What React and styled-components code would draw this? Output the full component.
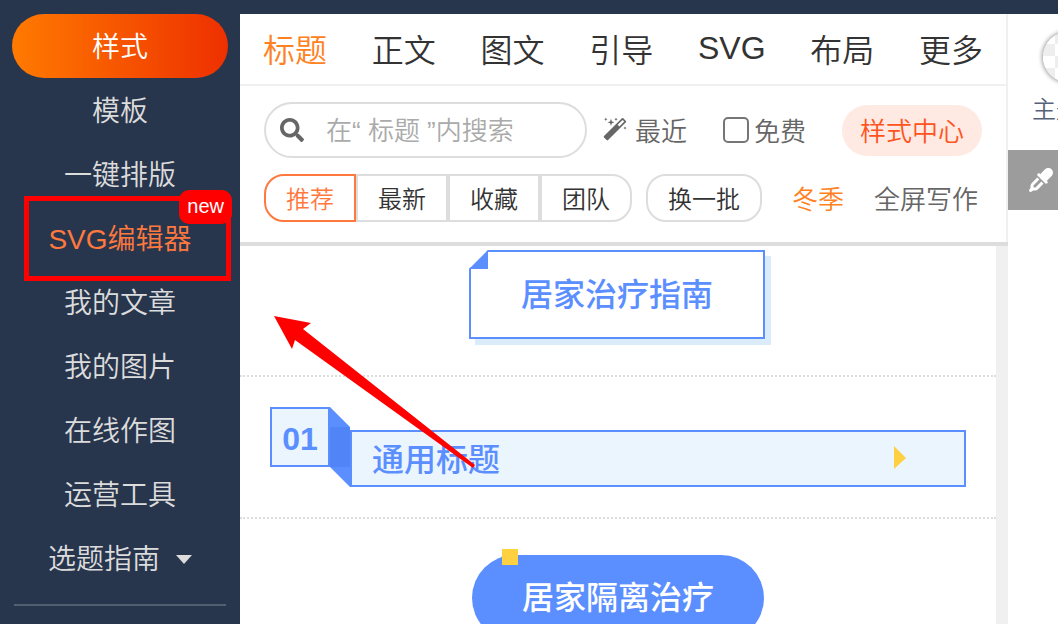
import styled, { createGlobalStyle, css } from "styled-components";
import { FaSearch } from "react-icons/fa";
import { FaEyeDropper } from "react-icons/fa6";

const menu = [
  { label: "样式", active: true },
  { label: "模板" },
  { label: "一键排版" },
  { label: "SVG编辑器", marked: true },
  { label: "我的文章" },
  { label: "我的图片" },
  { label: "在线作图" },
  { label: "运营工具" },
  { label: "选题指南", caret: true },
];

const tabs = ["标题", "正文", "图文", "引导", "SVG", "布局", "更多"];
const filters = ["推荐", "最新", "收藏", "团队"];

const WandIcon = () => (
  <svg width="24" height="24" viewBox="0 0 24 24" fill="#666" aria-hidden="true">
    <path
      fillRule="evenodd"
      d="M18.9 1.300a1 1 0 0 1 1.400 0l2.600 2.600a1 1 0 0 1 0 1.400L5.100 23.100a1 1 0 0 1-1.400 0L1 20.400a1 1 0 0 1 0-1.400zM19.600 2.900l-4.900 4.900 1.600 1.600L21.200 4.500z"
    />
    <path d="M8 1.800l.9 2.600 2.600.9-2.600.9L8 8.800l-.9-2.600-2.600-.9 2.600-.9zM2.800 .6l.5 1.200 1.200.5-1.200.5-.5 1.200-.5-1.200L1.100 2.300l1.200-.5zM13 .6l.5 1.200 1.200.5-1.200.5-.5 1.200-.5-1.200-1.200-.5 1.200-.5zM22 9.400l.5 1.200 1.200.5-1.200.5-.5 1.200-.5-1.200-1.200-.5 1.200-.5z" />
  </svg>
);

const App = () => {
  return (
    <>
      <GlobalStyle />
      <Page>
        <Sidebar>
          {menu.map((item) => (
            <MenuItem key={item.label} href="#" $active={item.active} $marked={item.marked}>
              {item.label}
              {item.caret && (
                <svg width="16" height="14" viewBox="0 0 16 14" fill="currentColor">
                  <path d="M0 5H16L8 14z" />
                </svg>
              )}
              {item.marked && (
                <>
                  <Frame />
                  <Badge>new</Badge>
                </>
              )}
            </MenuItem>
          ))}
          <Divider />
        </Sidebar>

        <Main>
          <Head>
            <Tabs>
              {tabs.map((tab, i) => (
                <Tab key={tab} href="#" $active={i === 0}>
                  {tab}
                </Tab>
              ))}
            </Tabs>
            <Tools>
              <ToolRow>
                <SearchBox>
                  <FaSearch size={24} />
                  <SearchInput aria-label="搜索" placeholder="在“ 标题 ”内搜索" />
                </SearchBox>
                <Recent type="button">
                  <WandIcon />
                  最近
                </Recent>
                <Free>
                  <Checkbox type="checkbox" />
                  免费
                </Free>
                <Center type="button">样式中心</Center>
              </ToolRow>
              <ToolRow>
                <Group>
                  {filters.map((name, i) => (
                    <Filter key={name} type="button" $active={i === 0}>
                      {name}
                    </Filter>
                  ))}
                </Group>
                <Shuffle type="button">换一批</Shuffle>
                <Links>
                  <TextLink href="#" $hot>
                    冬季
                  </TextLink>
                  <TextLink href="#">全屏写作</TextLink>
                </Links>
              </ToolRow>
            </Tools>
          </Head>

          <List>
            <Item>
              <PaperTitle>
                居家治疗指南
                <Corner viewBox="0 0 20 20">
                  <path d="M0 0H19L0 19z" fill="#fff" />
                  <path d="M19 0V19H0z" fill="#5b8eff" />
                </Corner>
              </PaperTitle>
            </Item>
            <Item $wide>
              <Number>01</Number>
              <Fold width="20" height="80" viewBox="0 0 20 80">
                <path d="M0 0L20 20V80L0 60z" fill="#5b8eff" />
                <path d="M0 20H20V60H0z" fill="#5084f7" />
              </Fold>
              <BarTitle>
                通用标题
                <svg width="12" height="24" viewBox="0 0 12 24">
                  <path d="M0 1L12 13L0 24z" fill="#ffd042" />
                </svg>
              </BarTitle>
            </Item>
            <Item $last>
              <PillTitle>居家隔离治疗</PillTitle>
            </Item>
          </List>
        </Main>

        <Side>
          <Theme type="button">
            <Swatch />
            主题色
          </Theme>
          <Picker type="button" aria-label="取色">
            <FaEyeDropper size={24} />
          </Picker>
        </Side>

        <Arrow width="202" height="152" viewBox="0 0 202 152">
          <path d="M0 0L37 7L29 13L201 149L199 152L21 24L18 33z" fill="#f00" />
        </Arrow>
      </Page>
    </>
  );
};

export default App;

// Styled Components
const GlobalStyle = createGlobalStyle`
  * {
    box-sizing: border-box;
  }

  body {
    margin: 0;
    background: #28364d;
  }

  body, button, input {
    font-family: "Liberation Sans", "Noto Sans CJK SC", sans-serif;
    font-weight: 350;
  }

  button {
    padding: 0;
    border: none;
    background: none;
    cursor: pointer;
  }

  a {
    text-decoration: none;
  }
`;

const Page = styled.div`
  position: relative;
  display: flex;
  height: 100vh;
  padding-top: 14px;
  overflow: hidden;
  background: #28364d;
`;

const Sidebar = styled.nav`
  flex: 0 0 240px;
  padding: 0 12px;
`;

const MenuItem = styled.a`
  position: relative;
  display: flex;
  align-items: center;
  justify-content: center;
  gap: 16px;
  height: 64px;
  padding-bottom: 2px;
  border-radius: 32px;
  font-size: 28px;
  color: ${({ $marked }) => ($marked ? "#ff793f" : "#dcdcdc")};

  ${({ $active }) =>
    $active &&
    css`
      color: #fff;
      background: linear-gradient(90deg, #ff7a00, #ee3000);
    `}
`;

const Frame = styled.span`
  position: absolute;
  top: -10px;
  left: 12px;
  right: -3px;
  height: 85px;
  border: 5px solid #f00;
`;

const Badge = styled.span`
  position: absolute;
  top: -16px;
  right: -4px;
  padding: 0 8px 2px;
  border-radius: 10px;
  background: #f00;
  color: #fff;
  font-size: 20px;
  line-height: 32px;
`;

const Divider = styled.hr`
  height: 2px;
  margin: 14px 2px 0;
  border: none;
  background: #535e71;
`;

const Main = styled.main`
  flex: 1;
  min-width: 0;
  display: flex;
  flex-direction: column;
  background: #fff;
`;

const Head = styled.header`
  border-bottom: 4px solid #ddd;
`;

const Tabs = styled.nav`
  display: flex;
  justify-content: space-between;
  align-items: center;
  height: 72px;
  padding: 0 23px 2px;
  border-right: 2px solid #f0f0f0;
  border-bottom: 2px solid #f0f0f0;
`;

const Tab = styled.a`
  font-size: 32px;
  color: ${({ $active }) => ($active ? "#ff8122" : "#333")};
`;

const Tools = styled.div`
  display: flex;
  flex-direction: column;
  gap: 16px;
  padding: 16px 24px 20px;
  border-right: 2px solid #f0f0f0;
`;

const ToolRow = styled.div`
  display: flex;
  align-items: center;
  justify-content: space-between;
`;

const SearchBox = styled.label`
  display: flex;
  align-items: center;
  gap: 22px;
  width: 323px;
  height: 56px;
  padding: 0 14px;
  border: 2px solid #ddd;
  border-radius: 28px;
  color: #666;

  svg {
    flex: none;
  }
`;

const SearchInput = styled.input`
  width: 100%;
  min-width: 0;
  padding: 2px 0 0;
  border: none;
  outline: none;
  background: none;
  font-size: 26px;

  &::placeholder {
    color: #aaa;
  }
`;

const Recent = styled.button`
  display: flex;
  align-items: center;
  gap: 8px;
  margin-right: 20px;
  padding-bottom: 2px;
  font-size: 26px;
  color: #666;
`;

const Free = styled.label`
  display: flex;
  align-items: center;
  gap: 5px;
  margin-right: 20px;
  padding-bottom: 2px;
  font-size: 26px;
  color: #666;
`;

const Checkbox = styled.input`
  appearance: none;
  width: 26px;
  height: 26px;
  margin: 2px 0 0;
  border: 2px solid #767676;
  border-radius: 5px;
`;

const Center = styled.button`
  width: 140px;
  height: 51px;
  padding-bottom: 2px;
  border-radius: 26px;
  background: #fee9e3;
  color: #ff5420;
  font-size: 26px;
`;

const Group = styled.div`
  display: flex;
`;

const Filter = styled.button`
  width: 92px;
  height: 48px;
  padding-bottom: 2px;
  border: 2px solid ${({ $active }) => ($active ? "#ff793f" : "#ddd")};
  color: ${({ $active }) => ($active ? "#ff793f" : "#333")};
  font-size: 24px;

  &:first-child {
    border-radius: 20px 0 0 20px;
  }

  &:last-child {
    border-radius: 0 20px 20px 0;
  }
`;

const Shuffle = styled.button`
  width: 116px;
  height: 48px;
  padding-bottom: 2px;
  border: 2px solid #ddd;
  border-radius: 20px;
  color: #333;
  font-size: 24px;
`;

const Links = styled.div`
  display: flex;
  gap: 30px;
  margin: 0 4px 0 16px;
  padding-bottom: 2px;
`;

const TextLink = styled.a`
  font-size: 26px;
  color: ${({ $hot }) => ($hot ? "#ff8122" : "#666")};
`;

const List = styled.section`
  flex: 1;
  min-height: 0;
  overflow: hidden;
  border-right: 12px solid #f0f0f0;
`;

const Item = styled.article`
  display: flex;
  justify-content: center;
  align-items: flex-start;
  padding: ${({ $wide, $last }) =>
    $wide ? "30px" : $last ? "36px 30px 30px" : "4px 32px 36px 30px"};
  border-bottom: 2px dotted #ddd;
`;

const titleText = css`
  font-size: 32px;
  font-weight: 500;
  color: #5b8eff;
`;

const PaperTitle = styled.div`
  ${titleText}
  position: relative;
  padding: 2px 50px 0;
  border: 2px solid #5b8eff;
  box-shadow: 6px 6px 0 #daecf9;
  line-height: 83px;
`;

const Corner = styled.svg`
  position: absolute;
  top: -2px;
  left: -2px;
  width: 20px;
  height: 20px;
`;

const Number = styled.div`
  ${titleText}
  flex: 0 0 60px;
  height: 60px;
  border: 2px solid #5b8eff;
  background: #ebf5fe;
  font-weight: 700;
  line-height: 60px;
  text-align: center;
`;

const Fold = styled.svg`
  flex: none;
`;

const BarTitle = styled.div`
  ${titleText}
  flex: 1;
  display: flex;
  align-items: center;
  justify-content: space-between;
  height: 57px;
  margin-top: 23px;
  padding: 0 58px 4px 20px;
  border: 2px solid #5b8eff;
  background: #ebf5fe;
`;

const PillTitle = styled.div`
  ${titleText}
  position: relative;
  padding: 0 50px;
  border-radius: 43px;
  background: #5b8eff;
  color: #fff;
  line-height: 86px;

  &::before {
    content: "";
    position: absolute;
    top: -6px;
    left: 30px;
    width: 16px;
    height: 16px;
    background: #ffd042;
  }
`;

const Side = styled.aside`
  flex: 0 0 50px;
  overflow: hidden;
  background: #fff;
`;

const Theme = styled.button`
  display: flex;
  flex-direction: column;
  align-items: center;
  gap: 8px;
  width: 120px;
  height: 136px;
  padding-top: 18px;
  color: #56617a;
  font-size: 24px;
`;

const Swatch = styled.span`
  width: 50px;
  height: 50px;
  border-radius: 50%;
  background: repeating-conic-gradient(#eee 0 25%, #fff 0 50%) 0 0 / 24px 24px;
  box-shadow: 0 0 4px 1px #999;
`;

const Picker = styled.button`
  display: flex;
  align-items: center;
  width: 120px;
  height: 60px;
  padding-left: 21px;
  background: #9c9c9c;
  color: #fff;
`;

const Arrow = styled.svg`
  position: absolute;
  top: 316px;
  left: 274px;
  pointer-events: none;
`;
